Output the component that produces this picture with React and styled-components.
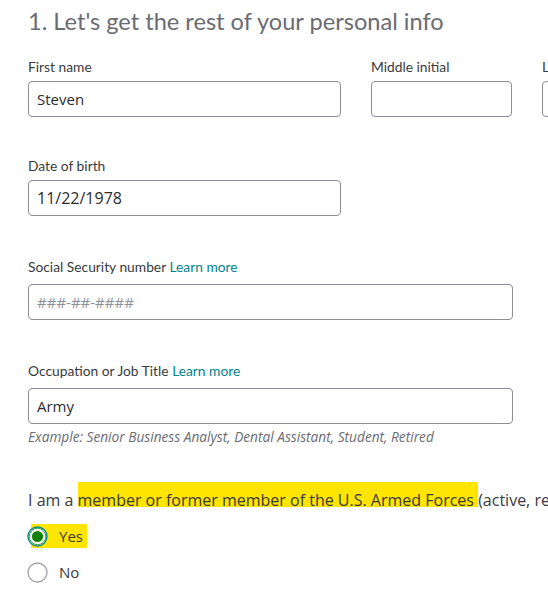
import styled, { createGlobalStyle } from "styled-components";

const GlobalStyle = createGlobalStyle`
  html, body {
    margin: 0;
    padding: 0;
    background: #ffffff;
    overflow: hidden;
  }
  body {
    font-family: "Lato", "Open Sans", sans-serif;
    color: #393a3d;
  }
`;

const Page = styled.div`
  padding: 5px 0 0 28px;
  width: max-content;
`;

const Title = styled.h1`
  margin: 0;
  font-size: 23.6px;
  line-height: 32px;
  font-weight: 400;
  color: #6b6c72;
`;

const Row = styled.div`
  display: grid;
  grid-template-columns: ${(p) => p.$cols || "313px"};
  column-gap: 30px;
  margin-top: ${(p) => p.$top}px;
`;

const Field = styled.div`
  display: flex;
  flex-direction: column;
`;

const Label = styled.label`
  font-size: 13.8px;
  line-height: 18px;
  color: #393a3d;
  margin-bottom: ${(p) => p.$gap || 5}px;
`;

const Link = styled.span`
  color: #00838f;
`;

const Input = styled.input`
  box-sizing: border-box;
  width: 100%;
  height: 36px;
  border: 1px solid #8d9096;
  border-radius: 4px;
  padding: 0 8px;
  font-family: "Open Sans", sans-serif;
  font-size: ${(p) => (p.$large ? 16 : 15)}px;
  color: #2b2c2f;
  background: #ffffff;
  outline: none;

  &::placeholder {
    color: #8d9096;
  }
`;

const Hint = styled.div`
  margin-top: 4px;
  font-family: "Open Sans", sans-serif;
  font-size: 13.7px;
  line-height: 18px;
  font-style: italic;
  color: #6b6c72;
`;

const Question = styled.p`
  margin: 43px 0 0;
  font-family: "Open Sans", sans-serif;
  font-size: 16px;
  line-height: 22px;
  white-space: nowrap;
  color: #393a3d;
`;

const Mark = styled.span`
  padding-top: 7px;
  background: linear-gradient(#ffe500, #ffe500) top / 100% calc(100% - 4px) no-repeat;
`;

const Options = styled.div`
  display: flex;
  flex-direction: column;
  gap: 12px;
  margin-top: 13px;
  margin-left: -1px;
`;

const Option = styled.label`
  display: flex;
  align-items: center;
  gap: 11px;
  width: max-content;
  height: 24px;
  padding-right: 4px;
  font-family: "Open Sans", sans-serif;
  font-size: 15px;
  color: #393a3d;
  background: ${(p) =>
    p.$marked
      ? "linear-gradient(to right, transparent 4px, #ffe500 4px)"
      : "transparent"};
`;

const Radio = ({ checked }) => (
  <svg width="21" height="21" viewBox="0 0 21 21">
    <circle
      cx="10.5"
      cy="10.5"
      r="9.5"
      fill="#ffffff"
      stroke={checked ? "#0d8f8a" : "#a6a8ad"}
      strokeWidth="1.4"
    />
    {checked && (
      <>
        <circle cx="10.5" cy="10.5" r="8.2" fill="none" stroke="#2e8b2e" strokeWidth="0.9" />
        <circle cx="10.5" cy="10.5" r="5.6" fill="#108000" />
      </>
    )}
  </svg>
);

export default function App() {
  return (
    <>
      <GlobalStyle />
      <Page>
        <Title>1. Let's get the rest of your personal info</Title>

        <Row $top={21} $cols="313px 141px 200px">
          <Field>
            <Label>First name</Label>
            <Input defaultValue="Steven" />
          </Field>
          <Field>
            <Label>Middle initial</Label>
            <Input />
          </Field>
          <Field>
            <Label>Last name</Label>
            <Input />
          </Field>
        </Row>

        <Row $top={40}>
          <Field>
            <Label>Date of birth</Label>
            <Input $large defaultValue="11/22/1978" />
          </Field>
        </Row>

        <Row $top={42} $cols="485px">
          <Field>
            <Label $gap={8}>
              Social Security number <Link>Learn more</Link>
            </Label>
            <Input placeholder="###-##-####" />
          </Field>
        </Row>

        <Row $top={42} $cols="485px">
          <Field>
            <Label $gap={8}>
              Occupation or Job Title <Link>Learn more</Link>
            </Label>
            <Input defaultValue="Army" />
            <Hint>Example: Senior Business Analyst, Dental Assistant, Student, Retired</Hint>
          </Field>
        </Row>

        <Question>
          I am a <Mark>member or former member of the U.S. Armed Forces </Mark>
          (active, reserve, or National Guard)
        </Question>

        <Options>
          <Option $marked>
            <Radio checked />
            Yes
          </Option>
          <Option>
            <Radio />
            No
          </Option>
        </Options>
      </Page>
    </>
  );
}
